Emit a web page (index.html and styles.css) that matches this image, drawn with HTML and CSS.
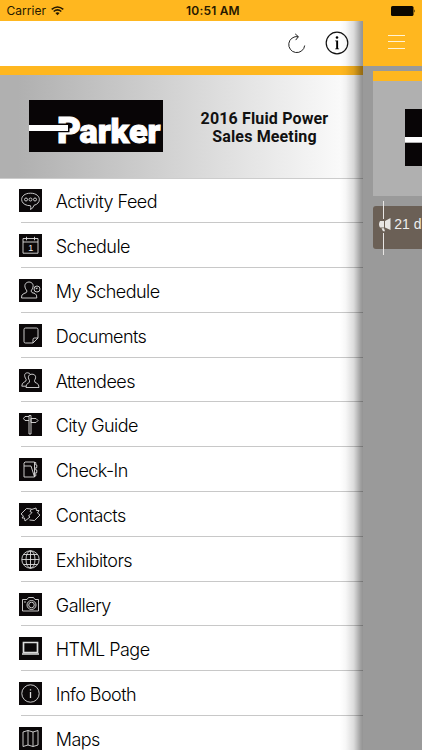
FILE: index.html
```
<!DOCTYPE html>
<html lang="en">
<head>
<meta charset="utf-8">
<title>2016 Fluid Power Sales Meeting</title>
<link rel="stylesheet" href="styles.css">
</head>
<body>
<div class="app">
  <header class="status">
    <span class="carrier">Carrier</span>
    <svg class="wifi" width="13" height="10" viewBox="0 0 13 10" fill="none" stroke="#261900" stroke-width="1.6"><path d="M.7 3.4Q6.5-1.4 12.3 3.4M2.7 5.5Q6.5 2.4 10.3 5.5"/><path d="M4.4 7Q6.5 5.5 8.6 7L6.5 9.3z" fill="#261900" stroke="none"/></svg>
    <span class="time">10:51 AM</span>
    <svg class="battery" width="25" height="10" viewBox="0 0 25 10"><rect width="22.5" height="10" rx="1.6"/><path d="M23.3 3.2q1.5 1.8 0 3.6z"/></svg>
  </header>
  <div class="body">
    <main class="menu">
      <div class="toolbar">
        <svg width="18" height="21" viewBox="0 0 18 21" fill="none" stroke="#222" stroke-width="1"><path d="M10.2 3.7A8 8 0 1 0 16.7 12.5M7.2.9l3.2 2.8-2.7 3.4"/></svg>
        <svg width="24" height="24" viewBox="0 0 24 24"><circle cx="12" cy="12" r="10.8" fill="none" stroke="#111" stroke-width="1.2"/><circle cx="12" cy="6.5" r="1.3"/><path d="M10.200 9.600h2.900v7.900h1v.7h-3.900v-.7h1v-7.200h-1z"/></svg>
      </div>
      <div class="banner">
        <svg class="logo" width="134" height="52" viewBox="0 0 134 52">
          <rect width="134" height="52" fill="#080506"/>
          <g class="brand"><text class="big" x="28" y="43.300" textLength="24" lengthAdjust="spacingAndGlyphs">P</text><text class="small" x="50.500" y="43.300" textLength="81" lengthAdjust="spacingAndGlyphs">arker</text></g>
          <path d="M0 23.600h40.500v8.700H0z" fill="#080506"/><path d="M0 25h39v5.900H0z" fill="#fff"/>
        </svg>
        <h1>2016 Fluid Power<br>Sales Meeting</h1>
      </div>
      <ul class="list">
        <li><svg class="ic" viewBox="0 0 23 23"><path d="M8.500 16.400C-.2 14.500.8 4.200 11.500 4.200S23 14.400 15 16.300q-.5 2.700-3.500 4.200.7-2.200 0-3.800z"/><circle cx="7" cy="10.500" r="1.500"/><circle cx="11.500" cy="10.500" r="1.500"/><circle cx="16" cy="10.500" r="1.500"/></svg><span>Activity Feed</span></li>
        <li><svg class="ic" viewBox="0 0 23 23"><path d="M4 4.500h15v14.700H4zM4 8h15M7.500 2.800v3.500M15.500 2.800v3.500"/><text x="9.200" y="17">1</text></svg><span>Schedule</span></li>
        <li><svg class="ic" viewBox="0 0 23 23"><path d="M8 12C3.500 6 7 3 10 3s6.500 3 2 9q0 2 4 2.500 2 1 1.800 4.500H2.500Q2 15.500 5 14.500 8 14 8 12z"/><circle cx="18" cy="10" r="3"/><path d="M18 8.500V10l-1.500-1"/></svg><span>My Schedule</span></li>
        <li><svg class="ic" viewBox="0 0 23 23"><path d="M6.500 4h11q1.500 0 1.500 1.500v8.500l-5 5H6.500Q5 19 5 17.500v-12Q5 4 6.500 4zM14 19v-3.500q0-1.500 1.500-1.500H19"/></svg><span>Documents</span></li>
        <li><svg class="ic" viewBox="0 0 23 23"><path d="M10.500 11.500C8 7.500 10 5.200 13 5.200s5 2.300 2.500 6.300q-.2 2.200 2.300 2.800 2.200.7 2.200 4.200H7q0-3.500 2-4.200 2-.6 1.500-2.800zM7.200 10.500C4.500 6.500 5.500 3.800 8.500 3.800q2 0 3 1.600M7.200 10.500q.2 2-2 2.600Q2.800 14 2.800 17.200H7"/></svg><span>Attendees</span></li>
        <li><svg class="ic" viewBox="0 0 23 23"><path d="M10 2.500h2V21h-2zM10 3.500H6L4.500 5.500 6 7.500h4M12 5.500h5l2 2-2 2h-5z"/></svg><span>City Guide</span></li>
        <li><svg class="ic" viewBox="0 0 23 23"><path d="M6 4h9.500v15H5V5zM5 8h7l3.500 11M15.500 4.500h1.300v2.500h1v2.500h-1V12h1v2.500h-1v3.500h-1.300"/></svg><span>Check-In</span></li>
        <li><svg class="ic" viewBox="0 0 23 23"><path d="M2 11l5.500-5.500 5 .5-1.500 2.500 2 1L9.500 13 11 14l-5 4-.5-3H3l1.500-2zM21 12l-5.500 5.500-5-.5M12.500 6.500L17 5l.5 2.500H20L18.500 10l2.500 2"/></svg><span>Contacts</span></li>
        <li><svg class="ic" viewBox="0 0 23 23"><circle cx="11.500" cy="11.500" r="8.700"/><ellipse cx="11.500" cy="11.500" rx="4.500" ry="8.700"/><path d="M11.500 2.800v17.400M2.800 11.500h17.400M4.500 6.500h14M4.500 16.500h14"/></svg><span>Exhibitors</span></li>
        <li><svg class="ic" viewBox="0 0 23 23"><path d="M3.500 6.500H8l1.500-2h5l1.500 2h3.500v11.500h-16z"/><circle cx="12.500" cy="12" r="4.500"/><circle cx="12.500" cy="12" r="2.800"/><path d="M5 9h2"/></svg><span>Gallery</span></li>
        <li><svg class="ic" viewBox="0 0 23 23"><path d="M4.500 5.500h14v10h-14z" stroke-width="1.700"/><path d="M3 17h17" stroke-width="1.500"/></svg><span>HTML Page</span></li>
        <li><svg class="ic" viewBox="0 0 23 23"><circle cx="11.500" cy="11.500" r="8.700"/><path d="M11.500 10v6M11.500 7.200v1.300" stroke-width="1.300"/></svg><span>Info Booth</span></li>
        <li><svg class="ic" viewBox="0 0 23 23"><path d="M4 5l5-1.500L14 5l5-1.500V18l-5 1.500L9 18l-5 1.500zM9 3.500V18M14 5v14.500"/></svg><span>Maps</span></li>
      </ul>
    </main>
    <aside class="side">
      <div class="sidebar-head"><i></i><i></i><i></i></div>
      <div class="card"><svg width="17" height="57" viewBox="0 0 17 57"><path d="M0 0h17v57H0z" fill="#080506"/><path d="M0 28h17v5.700H0z" fill="#fff"/></svg></div>
      <div class="notice">
        <svg width="16" height="54" viewBox="0 0 16 54"><path d="M5.500 0v18M5.500 32v22" stroke="#e8e6e4"/><path d="M12.500 17v12l-5.500-2.500v-6.500zM6 20v6.500H2q-2-3.200 0-6.500zM3.500 27.200H6l1 3H5z" fill="#e8e6e4"/></svg>
        <span>21 d</span>
      </div>
    </aside>
  </div>
</div>
</body>
</html>
```
FILE: styles.css
```
* { box-sizing: border-box; }
body { margin: 0; overflow: hidden; background: #9a9a9a; font-family: "Liberation Sans", sans-serif; }
.app { width: 422px; height: 750px; overflow: hidden; }
.status { height: 21px; background: #ffb71f; display: grid; grid-template-columns: 45px 141px 1fr 25px; align-items: center; padding: 0 6px 0 6.5px; font: 12px Inter, sans-serif; color: #261900; }
.carrier { letter-spacing: .05px; }
.wifi { grid-column: 2; margin-left: -1px; }
.time { grid-column: 3; margin-left: -6.5px; font-weight: 600; letter-spacing: .2px; }
.battery { fill: #0c0800; }
.body { display: flex; height: 729px; }
.menu { width: 362.5px; flex: none; background: #fff; position: relative; overflow: hidden; }
.menu::after { content: ""; position: absolute; inset: 0 0 0 auto; width: 23px; background: linear-gradient(90deg, #0000, #00000008 25%, #00000024 60%, #00000060 90%, #0000006c); }
.toolbar { height: 44.5px; display: flex; justify-content: flex-end; align-items: center; gap: 19px; padding-right: 13.5px; }
.banner { height: 113px; border-top: 9.5px solid #ffb71f; background: linear-gradient(90deg, #b0b0b0 5%, #d5d5d5 50%, #fafafa 94%); border-bottom: 1px solid #ccc; padding: 25px 0 0 29px; display: flex; }
.logo { flex: none; }
.brand { font-family: Roboto, sans-serif; font-weight: 900; fill: #fff; stroke: #fff; stroke-width: 1px; stroke-linejoin: miter; }
.big { font-size: 36px; }
.small { font-size: 33px; }
.banner h1 { width: 136px; margin: 10px 0 0 33.5px; text-align: center; font: 700 16px/18.5px Roboto, sans-serif; letter-spacing: .15px; color: #111; white-space: nowrap; }
.list { list-style: none; margin: 0; padding: 0 0 0 19.3px; }
.list li { height: 44.8px; display: flex; align-items: center; gap: 13.5px; background: linear-gradient(#c8c8c8, #c8c8c8) 1.7px 100% / 100% 1px no-repeat; }
.ic { width: 23px; height: 23px; flex: none; background: #0b0809; fill: none; stroke: #ddd; stroke-width: .9px; }
.ic text { font: 9px "Liberation Sans", sans-serif; fill: #eee; stroke: none; }
.list span { font: 300 18px/22px Inter, sans-serif; letter-spacing: -.55px; color: #000; margin-top: 3px; white-space: nowrap; }
.side { flex: 1; min-width: 0; background: #9a9a9a; overflow: hidden; }
.sidebar-head { height: 44.5px; background: #ffb71f; padding: 13.5px 0 0 25px; display: flex; flex-direction: column; gap: 5.5px; }
.sidebar-head i { width: 17px; height: 1px; background: #fff3d4; flex: none; }
.card { margin: 5.5px 0 0 10.5px; height: 125px; border-top: 10px solid #ffb71f; background: #b0b0b0; padding: 28px 0 0 32px; }
.notice { margin: 10px 0 0 10.5px; width: 80px; height: 43px; background: #6b6056; border-radius: 3px; display: flex; align-items: center; padding-left: 5px; color: #eee; font-size: 14px; white-space: nowrap; }
.notice svg { flex: none; }
.notice span { margin: -7px 0 0 .3px; }
```
